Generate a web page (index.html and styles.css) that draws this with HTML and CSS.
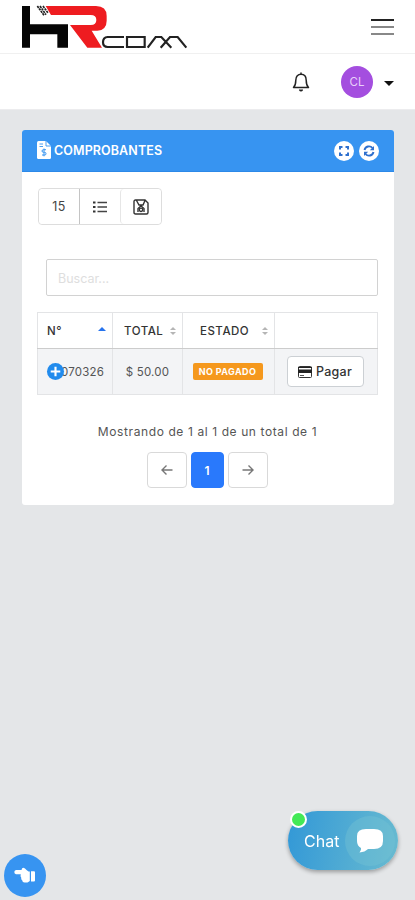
FILE: index.html
```html
<!DOCTYPE html>
<html lang="es">
<head>
<meta charset="utf-8">
<meta name="viewport" content="width=device-width, initial-scale=1">
<title>Comprobantes</title>
<link rel="stylesheet" href="styles.css">
</head>
<body>
<header class="brandbar">
  <svg class="logo" viewBox="0 0 600 159" role="img" aria-label="HR com">
    <path d="M66 18H90V73H204V143H172V103H90V143H66Z" fill="#050505"/>
    <path d="M137 18H288Q320 18 320 48V62Q320 90 292 92H275L306 143H262L210 75H272Q289 75 289 60Q289 45 272 45H153Z" fill="#ee1c20"/>
    <path d="M112 18L132 46M120 18L138 44M129 18L144 39" stroke="#222" stroke-width="5" stroke-dasharray="7 2" fill="none"/>
    <path d="M372 111H323Q309 112 309 127Q309 141 323 141H372M381 111H434V141H381ZM443 143L467 111H484L514 143M482 143L510 111H533L559 143" fill="none" stroke="#222" stroke-width="6.500"/>
  </svg>
  <button class="menu" aria-label="Menú"><i></i><i></i><i></i></button>
</header>
<nav class="userbar">
  <svg class="bell" viewBox="0 0 18 20" fill="none" stroke="#222" stroke-width="1.5" stroke-linejoin="round"><path d="M9 .5V2M1.5 15.5C3.5 13.5 3.8 11.5 3.8 8.2C3.8 4.5 6 2.3 9 2.3S14.200 4.500 14.200 8.200C14.200 11.500 14.500 13.500 16.500 15.500Z"/><path d="M7.500 17.500Q9 20 10.500 17.500"/></svg>
  <span class="avatar">CL</span>
  <span class="caret"></span>
</nav>
<main class="card">
  <div class="card-head">
    <svg class="doc" viewBox="0 0 14 18"><path d="M1.500 0H9L14 5V16.500Q14 18 12.500 18H1.500Q0 18 0 16.500V1.500Q0 0 1.500 0Z" fill="#fff"/><path d="M9 0V5H14M2.500 3H6M2.500 5.500H6" stroke="#3794f1" stroke-width=".9" fill="none"/><path d="M9 8.700H6.500Q5 8.700 5 10T6.500 11.300H7.500Q9 11.300 9 12.700T7.500 14H5M7 7.500V15.300" stroke="#3794f1" fill="none"/></svg>
    <h1>COMPROBANTES</h1>
    <span class="tool"><svg viewBox="0 0 20 20"><path d="M6 8.500V6H8.500M11.500 6H14V8.500M14 11.500V14H11.500M8.500 14H6V11.500" fill="none" stroke="#2f70ce" stroke-width="2"/></svg></span>
    <span class="tool"><svg viewBox="0 0 20 20"><path d="M5.500 9A4.600 4.600 0 0 1 13.500 7M14.500 11A4.600 4.600 0 0 1 6.500 13" fill="none" stroke="#2f70ce" stroke-width="1.900"/><path d="M15 5V9.200H10.800ZM5 15V10.800H9.200Z" fill="#2f70ce"/></svg></span>
  </div>
  <div class="card-body">
    <div class="buttons">
      <button>15</button>
      <button aria-label="Columnas"><svg width="14" height="12" viewBox="0 0 14 12"><path d="M0 1.500H2.500M0 6H2.500M0 10.500H2.500" stroke="#333" stroke-width="2.200"/><path d="M4.500 1.500H14M4.500 6H14M4.500 10.500H14" stroke="#444" stroke-width="1.400"/></svg></button>
      <button aria-label="Guardar"><svg width="16" height="16" viewBox="0 0 16 16" fill="none" stroke="#333" stroke-width="1.400"><path d="M2.500 1H12L15 4V13.500Q15 15 13.500 15H2.500Q1 15 1 13.500V2.500Q1 1 2.500 1ZM3.500 1.500L6 6H10L12 1.500M5 13V9.500L8 7L11 9.500V13"/><circle cx="8" cy="10.800" r="1.700"/></svg></button>
    </div>
    <input class="search" placeholder="Buscar..." aria-label="Buscar">
    <table>
      <colgroup><col class="c1"><col class="c2"><col class="c3"><col></colgroup>
      <thead><tr>
        <th><div class="th">N°<b class="up"></b></div></th>
        <th><div class="th total">TOTAL<b class="sort"></b></div></th>
        <th><div class="th estado">ESTADO<b class="sort"></b></div></th>
        <th></th>
      </tr></thead>
      <tbody><tr>
        <td><div class="num"><span class="plus"><svg viewBox="0 0 16 16"><path d="M8 3.500V12.500M3.500 8H12.500" stroke="#fff" stroke-width="2"/></svg></span>070326</div></td>
        <td class="amount">$ 50.00</td>
        <td class="status"><span class="badge">NO PAGADO</span></td>
        <td class="action"><button class="pay"><svg width="14" height="12" viewBox="0 0 14 12"><rect x=".5" y=".5" width="13" height="11" rx="1" fill="#fff" stroke="#333"/><path d="M0 1H14V2H0ZM0 3.500H14V7H0Z" fill="#222"/><path d="M2 9.500H6" stroke="#555"/></svg>Pagar</button></td>
      </tr></tbody>
    </table>
    <p class="info">Mostrando de 1 al 1 de un total de 1</p>
    <div class="pager">
      <button aria-label="Anterior"><svg viewBox="0 0 12 12"><path d="M11.500 6H1M5.500 1.500L1 6L5.500 10.500"/></svg></button>
      <button class="current">1</button>
      <button aria-label="Siguiente"><svg viewBox="0 0 12 12"><path d="M.5 6H11M6.500 1.500L11 6L6.500 10.500"/></svg></button>
    </div>
  </div>
</main>
<button class="hand" aria-label="Abrir panel"><svg viewBox="0 0 22 18"><path d="M2 3H7.500Q7.800 .8 9.500 .8Q11 1 12.500 3L14.500 4.500H15.800V14L13.500 15.500H10.500Q8.300 15.500 8.300 13.500Q6.800 12.500 7.200 10.500Q6 9.500 6.800 7.200H2Q.3 6.800 .3 5.100T2 3ZM17 4.200H20Q21 4.200 21 5.200V13.500Q21 14.500 20 14.500H17Z" fill="#fff"/></svg></button>
<button class="chat"><span class="online"></span><span class="chat-label">Chat</span><span class="bubble"><svg viewBox="0 0 28 26"><path d="M10 1H18Q27 1 27 8V13Q27 21 18 21H12Q9 24 3.500 24.500Q5.500 22.500 5 20Q1 18 1 13V8Q1 1 10 1Z" fill="#fff"/></svg></span></button>
</body>
</html>
```
FILE: styles.css
```css
* { box-sizing: border-box; }
body { margin: 0; height: 900px; overflow: hidden; background: #e4e6e8; font-family: Inter, "Liberation Sans", sans-serif; color: #555; }
button { font: inherit; color: inherit; padding: 0; margin: 0; background: #fff; }
svg { display: block; flex: none; }

.brandbar { height: 54px; background: #fff; border-bottom: 1px solid #f0f0f0; display: flex; justify-content: space-between; }
.logo { width: 200px; height: 53px; }
.menu { border: 0; width: 23px; height: 16px; margin: 19px 21px 0 0; display: flex; flex-direction: column; justify-content: space-between; }
.menu i { display: block; width: 23px; height: 2px; background: #888; }
.menu i:first-child { background: #222; }

.userbar { height: 56px; background: #fff; border-bottom: 1px solid #ececee; display: flex; align-items: center; justify-content: flex-end; padding-right: 21px; }
.bell { width: 18px; height: 20px; margin-right: 31px; }
.avatar { width: 32px; height: 32px; border-radius: 50%; background: #a44edf; color: #e9d0fa; font-size: 11.5px; display: grid; place-items: center; margin-right: 11px; }
.caret { border: 5px solid transparent; border-top-color: #111; border-bottom: 0; margin-top: 4px; }

.card { margin: 20px 21px 0 22px; height: 375px; background: #fff; border-radius: 3px; overflow: hidden; }
.card-head { height: 42px; background: #3794f1; border-bottom: 1px solid #2c89e8; display: flex; align-items: center; padding: 0 15px; }
.doc { width: 14px; height: 18px; margin: -2px 3px 0 0; }
.card-head h1 { margin: 0 auto 0 0; color: #fff; font-size: 12.5px; font-weight: 600; line-height: 18px; letter-spacing: .1px; }
.tool { width: 20px; height: 20px; border-radius: 50%; background: #fff; margin-left: 5px; }
.card-body { padding: 16px 16px 0 15px; }

.buttons { display: flex; width: 124px; height: 37px; margin-left: 1px; border: 1px solid #ddd; border-radius: 4px; }
.buttons button { flex: 1; border: 0; border-left: 1px solid #e6e6e6; border-radius: 4px; display: grid; place-items: center; font-size: 12.5px; letter-spacing: .3px; color: #444; }
.buttons button:first-child { border-left: 0; }
.buttons button:nth-child(2) { border-left-color: #c4c4c4; border-radius: 0; }
.search { display: block; width: 332px; height: 37px; margin: 34px 0 16px 9px; padding: 2px 11px 0; border: 1px solid #d2d2d2; border-radius: 2px; font: 12.5px Inter, sans-serif; background: #fff; }
.search::placeholder { color: #dedede; opacity: 1; }

table { width: 341px; table-layout: fixed; border-collapse: collapse; }
.c1 { width: 75px; }
.c2 { width: 70px; }
.c3 { width: 92px; }
th, td { border: 1px solid #e3e4e6; padding: 0; }
th { height: 36px; border-bottom-color: #ccc; font-size: 11.5px; font-weight: 500; color: #333; }
td { height: 46px; background: #f3f4f6; font-size: 11.5px; }
.th { display: flex; align-items: center; justify-content: space-between; padding: 0 6px 0 9px; letter-spacing: .5px; }
.total { padding-left: 11px; }
.estado { padding-left: 17px; }
.up { border: 4px solid transparent; border-bottom-color: #2673ed; border-top: 0; margin-top: -4px; }
.sort { display: grid; gap: 2px; }
.sort::before, .sort::after { content: ""; border: 3.500px solid transparent; }
.sort::before { border-top: 0; border-bottom-color: #b5b5b5; }
.sort::after { border-bottom: 0; border-top-color: #b5b5b5; }
.num { display: flex; align-items: center; padding-left: 9px; letter-spacing: .2px; }
.plus { width: 17px; height: 17px; border-radius: 50%; background: #218bed; margin-right: -3px; position: relative; z-index: 1; }
.amount, .status, .action { text-align: center; }
.status, .action { padding-right: 2px; }
.amount { letter-spacing: .2px; }
.badge { display: inline-block; vertical-align: middle; width: 70px; height: 17px; line-height: 17px; border-radius: 2px; background: #f5981d; color: #fff; font-size: 9px; font-weight: 700; letter-spacing: .4px; }
.pay { display: inline-flex; vertical-align: middle; align-items: center; justify-content: center; gap: 4px; width: 77px; height: 31px; border: 1px solid #ccd0d4; border-radius: 4px; font-size: 12.5px; font-weight: 500; letter-spacing: .3px; color: #333; }

.info { margin: 28px 0 11px; line-height: 18px; font-size: 12px; text-align: center; letter-spacing: .6px; }
.pager { display: flex; justify-content: center; gap: 4px; margin-left: -1px; }
.pager button { width: 40px; height: 36px; border: 1px solid #d9d9d9; border-radius: 4px; display: grid; place-items: center; }
.pager .current { width: 33px; background: #2979fc; border-color: #2979fc; color: #fff; font-size: 12px; font-weight: 600; }
.pager svg { width: 12px; height: 12px; fill: none; stroke: #777; stroke-width: 1.400; }

.hand { position: fixed; left: 4px; bottom: 3px; width: 42px; height: 43px; border: 0; border-radius: 50%; background: #3794f1; display: grid; place-items: center; }
.hand svg { width: 22px; height: 18px; }
.chat { position: fixed; right: 17px; bottom: 30px; width: 110px; height: 59px; border: 0; border-radius: 30px; background: linear-gradient(100deg, #3298d7, #69bbd0); box-shadow: 0 2px 4px #0005; color: #fff; display: flex; align-items: center; justify-content: space-between; padding: 0 3px 0 16px; }
.chat-label { font-size: 16px; margin-top: 1px; }
.bubble { width: 50px; height: 50px; border-radius: 50%; background: #76c4d466; display: grid; place-items: center; }
.bubble svg { width: 28px; height: 26px; }
.online { position: absolute; left: 2px; top: 0; width: 17px; height: 17px; border: 2px solid #fff; border-radius: 50%; background: #43e957; }
```
